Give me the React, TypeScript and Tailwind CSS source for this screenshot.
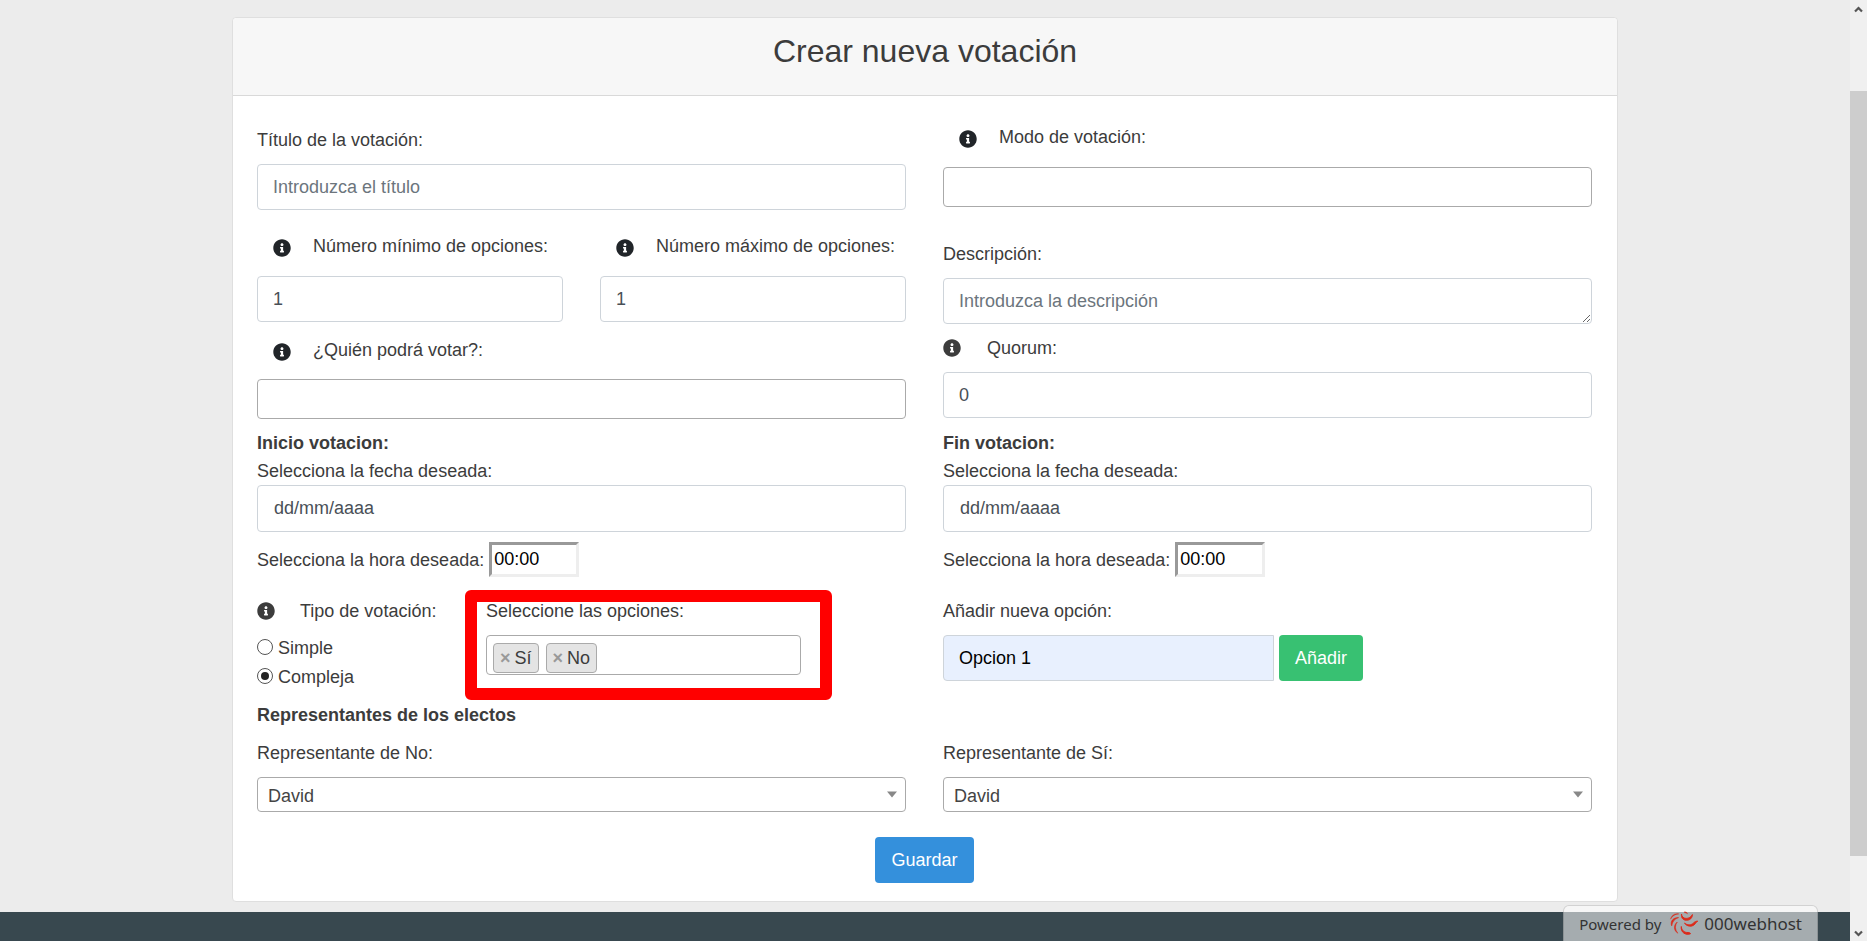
import { useState } from "react";
import type { ReactNode } from "react";
import { FaInfoCircle } from "react-icons/fa";

const control =
  "block w-full rounded border border-[#ced4da] bg-white px-[15px] text-lg leading-7 text-[#495057] outline-none";
const tagBox = "flex h-10 w-full rounded border border-[#aaa] bg-white px-[6px] text-lg outline-none";

function InfoLabel({ htmlFor, children }: { htmlFor: string; children: ReactNode }) {
  return (
    <div className="flex pl-4">
      <button type="button" aria-label="Información" className="pt-[2px] text-[#212529]">
        <FaInfoCircle size={18} />
      </button>
      <label htmlFor={htmlFor} className="ml-[22px]">
        {children}
      </label>
    </div>
  );
}

function FlatInfo() {
  return (
    <button type="button" aria-label="Información" className="mb-[2px] text-[#3c3c3c]">
      <FaInfoCircle size={18} />
    </button>
  );
}

function Schedule({ id, title }: { id: string; title: string }) {
  return (
    <div>
      <p className="leading-7 font-bold">{title}</p>
      <label htmlFor={`${id}-fecha`} className="block leading-7">
        Selecciona la fecha deseada:
      </label>
      <input
        id={`${id}-fecha`}
        placeholder="dd/mm/aaaa"
        className={`${control} h-[47px] pl-4 placeholder-[#495057]`}
      />
      <div className="mt-[10px] flex items-center gap-[5px]">
        <label htmlFor={`${id}-hora`} className="pt-[2px]">
          Selecciona la hora deseada:
        </label>
        <input
          id={`${id}-hora`}
          defaultValue="00:00"
          className="h-[35px] w-[90px] border-[3px] border-t-[#999] border-r-[#eee] border-b-[#eee] border-l-[#999] bg-white px-[2px] text-lg text-black outline-none"
        />
      </div>
    </div>
  );
}

function Representative({ id, label }: { id: string; label: string }) {
  return (
    <div>
      <label htmlFor={id} className="mb-[9px] block">
        {label}
      </label>
      <div className="relative">
        <select
          id={id}
          className="block h-[35px] w-full appearance-none rounded border border-[#aaa] bg-white pt-[2px] pr-8 pl-[10px] text-lg text-[#444] outline-none"
        >
          <option>David</option>
        </select>
        <svg className="pointer-events-none absolute top-[14px] right-[9px]" width="10" height="7" viewBox="0 0 10 7">
          <path d="M0 0.5h10L5 6.5z" fill="#888" />
        </svg>
      </div>
    </div>
  );
}

function Tag({ children }: { children: ReactNode }) {
  return (
    <li className="flex h-[30px] items-center gap-1 rounded border border-[#aaa] bg-[#e4e4e4] px-[6px]">
      <button type="button" aria-label="Quitar" className="font-bold text-[#999]">
        ×
      </button>
      {children}
    </li>
  );
}

function Radio({ label, checked, onChange }: { label: string; checked: boolean; onChange: () => void }) {
  return (
    <label className="flex items-center gap-[5px]">
      <input
        type="radio"
        name="tipo"
        checked={checked}
        onChange={onChange}
        className="mb-[3px] size-4 appearance-none rounded-full border border-[#555] bg-white bg-clip-content p-[3px] checked:bg-[#222]"
      />
      {label}
    </label>
  );
}

function Swirl() {
  return (
    <svg width="30" height="25" viewBox="0 0 30 25" fill="#dc2a1a" stroke="#dc2a1a" strokeLinejoin="round">
      <path strokeWidth="0.4" d="M15.500 0.800c1.600 0 2.800.8 3 2.200-1-.9-1.900-1.300-3.200-1.400z" />
      <path strokeWidth="0.9" d="M12.500 3c.3 2.600 2 4.300 4.600 4.400 2.700.1 5-1.400 6.300-3.900.1 3.400-2.400 5.900-6 5.800C13.800 9.200 12 6.800 12.500 3z" />
      <path strokeWidth="0.9" d="M15.500 12c3 2.600 6.700 2.400 9.300-.3 1.300-1.200 2.500-1.700 4-1.500-1.300.6-1.800 1.500-2.700 2.700-2.700 3.300-8.300 3-10.600-.9z" />
      <path strokeWidth="1" d="M12.300 15.500c.2 3.900 3 6.200 6.800 6 1.200 0 1.900.3 2.500 1.200-4.600 2-10.300-1.200-9.300-7.200z" />
      <path strokeWidth="0.600" d="M8.300 11c-2.600 3.500-2.400 7.500.5 11.200C4.600 19.300 4.300 14.300 8.300 11z" />
      <path strokeWidth="0.600" d="M9.600 6.600C5.500 8 3.300 10.600 2.700 14.900.9 10.400 4.200 6.300 9.600 6.600z" />
      <path strokeWidth="0.400" d="M9.800 2.900C6 3 3.500 4.800 1.500 8.200 2.500 4.300 5.700 2 9.800 2.900z" />
    </svg>
  );
}

function Chevron({ flip = false }: { flip?: boolean }) {
  return (
    <svg width="9" height="7" viewBox="0 0 9 7" className={flip ? "rotate-180" : ""}>
      <path d="M1 5.500 4.500 2 8 5.500" fill="none" stroke="#555" strokeWidth="2.200" />
    </svg>
  );
}

export default function App() {
  const [kind, setKind] = useState("Compleja");

  return (
    <div className="flex h-screen overflow-hidden bg-[#ececec] font-['Liberation_Sans',Arial,sans-serif] text-lg leading-[29px] text-[#3c3c3c]">
      <div className="relative flex min-w-0 flex-1 flex-col">
        <main className="mx-auto mt-[17px] w-full max-w-[1386px] rounded border border-[#dfdfdf] bg-white">
          <header className="rounded-t border-b border-[#d9d9d9] bg-[#f7f7f7] pt-[14px] pb-[25px] text-center">
            <h1 className="text-[32px] leading-[38px]">Crear nueva votación</h1>
          </header>

          <form className="pt-[27px] pr-[25px] pb-[18px] pl-6" onSubmit={(e) => e.preventDefault()}>
            <div className="grid grid-cols-2 gap-x-[37px]">
              <div className="pt-[3px]">
                <label htmlFor="titulo" className="mb-[9px] block">
                  Título de la votación:
                </label>
                <input
                  id="titulo"
                  placeholder="Introduzca el título"
                  className={`${control} h-[46px] placeholder-[#6c757d]`}
                />
                <div className="mt-[22px] grid grid-cols-2 gap-x-[37px]">
                  <div>
                    <InfoLabel htmlFor="minimo">Número mínimo de opciones:</InfoLabel>
                    <input id="minimo" defaultValue="1" className={`${control} mt-[15px] h-[46px]`} />
                  </div>
                  <div>
                    <InfoLabel htmlFor="maximo">Número máximo de opciones:</InfoLabel>
                    <input id="maximo" defaultValue="1" className={`${control} mt-[15px] h-[46px]`} />
                  </div>
                </div>
                <div className="mt-[14px]">
                  <InfoLabel htmlFor="votantes">¿Quién podrá votar?:</InfoLabel>
                  <input id="votantes" className={`${tagBox} mt-[14px]`} />
                </div>
              </div>

              <div>
                <InfoLabel htmlFor="modo">Modo de votación:</InfoLabel>
                <input id="modo" className={`${tagBox} mt-[15px]`} />
                <label htmlFor="descripcion" className="mt-[33px] mb-[9px] block">
                  Descripción:
                </label>
                <textarea
                  id="descripcion"
                  rows={1}
                  placeholder="Introduzca la descripción"
                  className={`${control} h-[46px] resize-y py-2 placeholder-[#6c757d]`}
                />
                <div className="mt-[10px] flex items-center gap-[26px]">
                  <FlatInfo />
                  <label htmlFor="quorum">Quorum:</label>
                </div>
                <input id="quorum" defaultValue="0" className={`${control} mt-[9px] h-[46px]`} />
              </div>
            </div>

            <div className="mt-[10px] grid grid-cols-2 gap-x-[37px]">
              <Schedule id="inicio" title="Inicio votacion:" />
              <Schedule id="fin" title="Fin votacion:" />
            </div>

            <div className="mt-5 grid grid-cols-2 gap-x-[37px]">
              <div className="flex">
                <fieldset className="w-[229px]">
                  <legend className="mb-2 flex items-center gap-[25px]">
                    <FlatInfo />
                    Tipo de votación:
                  </legend>
                  <Radio label="Simple" checked={kind === "Simple"} onChange={() => setKind("Simple")} />
                  <Radio label="Compleja" checked={kind === "Compleja"} onChange={() => setKind("Compleja")} />
                </fieldset>
                <div className="relative w-[315px]">
                  <label htmlFor="opciones" className="mb-[9px] block">
                    Seleccione las opciones:
                  </label>
                  <div className={tagBox}>
                    <ul className="mt-[7px] flex gap-[7px]">
                      <Tag>Sí</Tag>
                      <Tag>No</Tag>
                    </ul>
                    <input id="opciones" className="min-w-0 flex-1 outline-none" />
                  </div>
                  <div className="pointer-events-none absolute -top-[7px] -right-[31px] -left-[21px] h-[110px] rounded-md border-[12px] border-[#f00]" />
                </div>
              </div>
              <div>
                <label htmlFor="nueva" className="mb-[9px] block">
                  Añadir nueva opción:
                </label>
                <div className="flex gap-[5px]">
                  <input
                    id="nueva"
                    defaultValue="Opcion 1"
                    className="h-[46px] w-[331px] rounded-l border border-[#ced4da] bg-[#e8f0fe] px-[15px] text-lg text-black outline-none"
                  />
                  <button type="button" className="h-[46px] rounded bg-[#38c172] px-4 text-white">
                    Añadir
                  </button>
                </div>
              </div>
            </div>

            <h2 className="mt-[9px] mb-[9px] font-bold">Representantes de los electos</h2>
            <div className="grid grid-cols-2 gap-x-[37px]">
              <Representative id="rep-no" label="Representante de No:" />
              <Representative id="rep-si" label="Representante de Sí:" />
            </div>

            <div className="mt-[25px] text-center">
              <button type="submit" className="mx-auto block h-[46px] rounded bg-[#3490dc] px-4 text-white">
                Guardar
              </button>
            </div>
          </form>
        </main>

        <footer className="mt-[10px] min-h-[29px] flex-1 bg-[#38484f]" />
        <a
          href="#powered"
          className="absolute right-8 bottom-0 flex h-9 items-center gap-2 rounded-t-md border border-b-0 border-black/15 bg-white/55 px-[15px] font-['Noto_Sans','Open_Sans',sans-serif] text-[15px] leading-6 text-[#333]"
        >
          Powered by
          <span className="flex items-center gap-[5px] text-[17px]">
            <Swirl />
            000webhost
          </span>
        </a>
      </div>

      <div className="flex w-[17px] flex-col items-center bg-[#f0f0f0]">
        <div className="flex h-[91px] items-start pt-[6px]">
          <Chevron />
        </div>
        <div className="h-[765px] w-full bg-[#cdcdcd]" />
        <div className="mt-auto flex pb-[4px]">
          <Chevron flip />
        </div>
      </div>
    </div>
  );
}
